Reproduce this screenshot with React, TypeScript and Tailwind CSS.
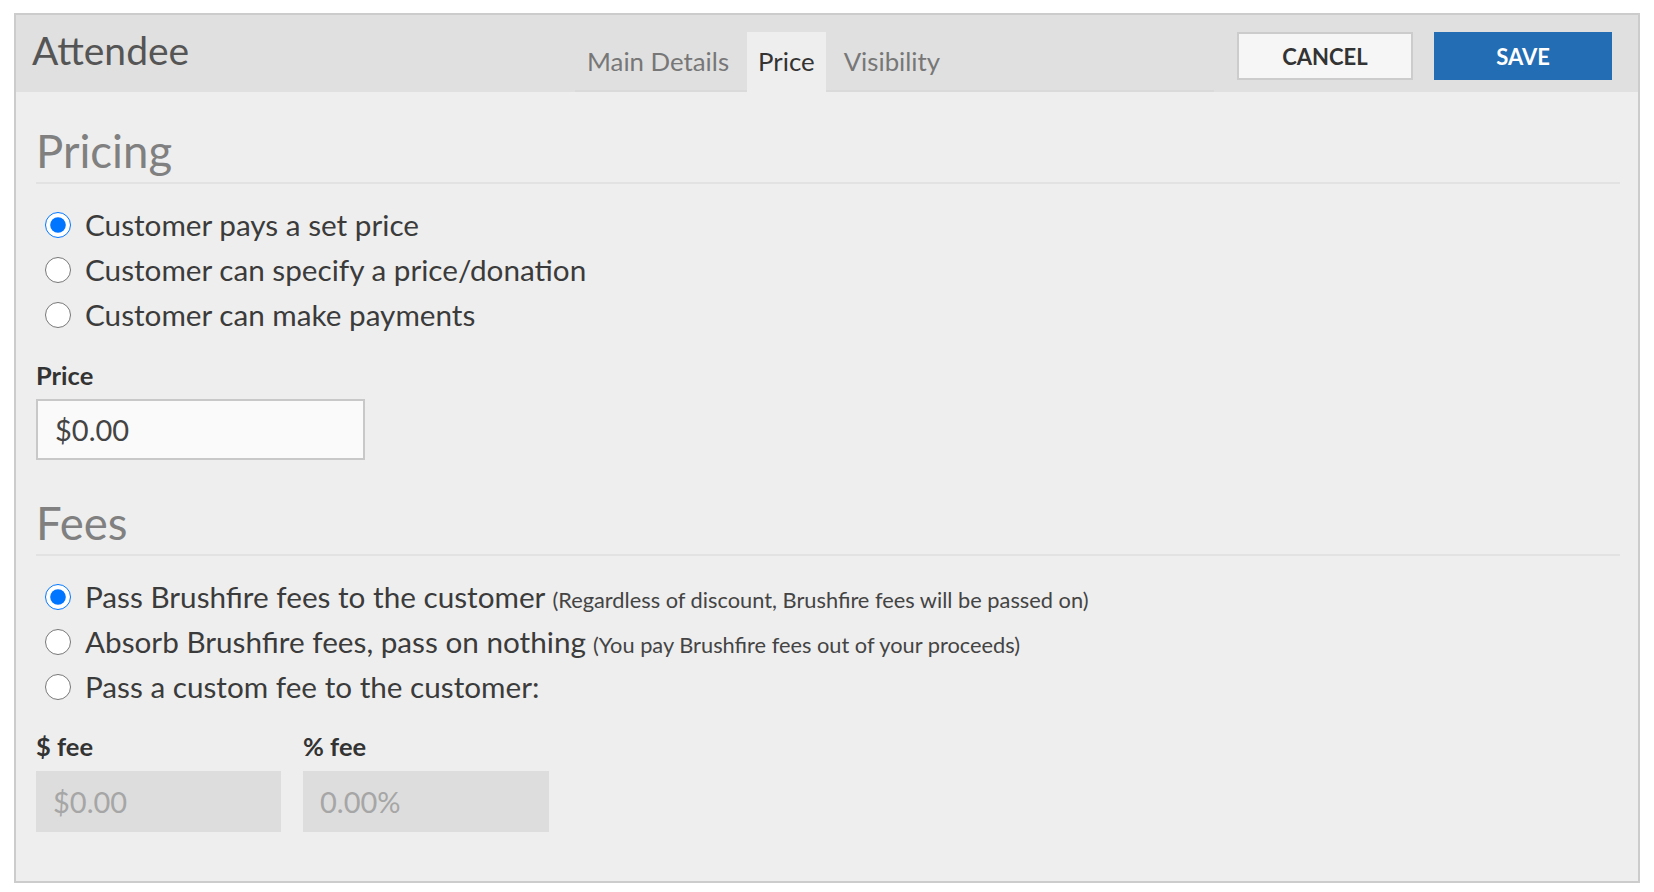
import { useState } from "react";

// Ticket type editor — "Price" tab

const FONT = { fontFamily: "Lato, 'Open Sans', sans-serif" };

interface Option {
  id: string;
  label: string;
  note?: string;
}

const PRICING: Option[] = [
  { id: "set", label: "Customer pays a set price" },
  { id: "donation", label: "Customer can specify a price/donation" },
  { id: "payments", label: "Customer can make payments" },
];

const FEES: Option[] = [
  { id: "pass", label: "Pass Brushfire fees to the customer", note: "(Regardless of discount, Brushfire fees will be passed on)" },
  { id: "absorb", label: "Absorb Brushfire fees, pass on nothing", note: "(You pay Brushfire fees out of your proceeds)" },
  { id: "custom", label: "Pass a custom fee to the customer:" },
];

function RadioList({ name, options, value, onChange }: {
  name: string;
  options: Option[];
  value: string;
  onChange: (v: string) => void;
}) {
  return (
    <div className="flex flex-col">
      {options.map((o) => (
        <label key={o.id} className="flex items-center h-[45px] cursor-pointer">
          <input
            type="radio"
            name={name}
            checked={value === o.id}
            onChange={() => onChange(o.id)}
            className="m-0 ml-[9px] w-[26px] h-[26px] accent-[#0075ff] shrink-0"
          />
          <span className="ml-[14px] text-[29.7px] text-[#3b3b3b] whitespace-nowrap">
            {o.label}
            {o.note && <span className="ml-[7px] text-[21.8px] text-[#444]">{o.note}</span>}
          </span>
        </label>
      ))}
    </div>
  );
}

function Section({ title }: { title: string }) {
  return (
    <h2 className="text-[45.5px] leading-[1.16] text-[#808080] font-normal pb-[4px] border-b-2 border-[#e2e2e2]">
      {title}
    </h2>
  );
}

export default function App() {
  const [tab, setTab] = useState("price");
  const [pricing, setPricing] = useState("set");
  const [fees, setFees] = useState("pass");
  const [price, setPrice] = useState("$0.00");

  const tabs = [
    { id: "main", label: "Main Details" },
    { id: "price", label: "Price" },
    { id: "visibility", label: "Visibility" },
  ];

  return (
    <div className="min-h-screen bg-white px-[14px] pt-[13px]" style={FONT}>
      <div className="border-2 border-[#cccccc] bg-[#eeeeee]">
        {/* Header */}
        <div className="flex h-[77px] bg-[#e0e0e0]">
          <div className="w-[559px] pl-[16px] flex items-center pb-[6px]">
            <span className="text-[39px] text-[#555555]">Attendee</span>
          </div>
          <div className="w-[639px] flex items-end gap-[7px] pl-[1px] border-b-2 border-[#dadada]">
            {tabs.map((t) => (
              <button
                key={t.id}
                onClick={() => setTab(t.id)}
                className={
                  "h-[60px] px-[11px] pb-[2px] text-[25.8px] flex items-center -mb-[2px] " +
                  (tab === t.id ? "bg-[#eeeeee] text-[#333333]" : "text-[#777777]")
                }
              >
                {t.label}
              </button>
            ))}
          </div>
          <div className="ml-auto flex items-start pt-[17px] pr-[26px] gap-[21px]">
            <button className="w-[176px] h-[48px] border-2 border-[#cccccc] bg-[#f6f6f6] text-[22px] font-bold text-[#333333]">
              CANCEL
            </button>
            <button className="w-[178px] h-[48px] bg-[#236db4] text-[22px] font-bold text-white">
              SAVE
            </button>
          </div>
        </div>

        {/* Body */}
        <div className="pl-[20px] pr-[18px] pt-[33px] pb-[49px]">
          <Section title="Pricing" />
          <div className="mt-[19px]">
            <RadioList name="pricing" options={PRICING} value={pricing} onChange={setPricing} />
          </div>

          <label className="block mt-[22px] text-[25.5px] leading-[30px] font-bold text-[#333333]">Price</label>
          <input
            type="text"
            value={price}
            onChange={(e) => setPrice(e.target.value)}
            className="mt-[9px] block w-[329px] h-[61px] border-2 border-[#c8c8c8] bg-[#fafafa] px-[17px] text-[29px] text-[#444444] outline-none"
          />

          <div className="mt-[37px]">
            <Section title="Fees" />
          </div>
          <div className="mt-[19px]">
            <RadioList name="fees" options={FEES} value={fees} onChange={setFees} />
          </div>

          <div className="flex gap-[22px] mt-[21px]">
            <div>
              <label className="block text-[25.5px] leading-[30px] font-bold text-[#333333]">$ fee</label>
              <input
                type="text"
                disabled
                placeholder="$0.00"
                className="mt-[10px] block w-[245px] h-[61px] bg-[#dddddd] px-[17px] text-[29px] placeholder-[#a6a6a6] outline-none"
              />
            </div>
            <div>
              <label className="block text-[25.5px] leading-[30px] font-bold text-[#333333]">% fee</label>
              <input
                type="text"
                disabled
                placeholder="0.00%"
                className="mt-[10px] block w-[246px] h-[61px] bg-[#dddddd] px-[17px] text-[29px] placeholder-[#a6a6a6] outline-none"
              />
            </div>
          </div>
        </div>
      </div>
    </div>
  );
}
